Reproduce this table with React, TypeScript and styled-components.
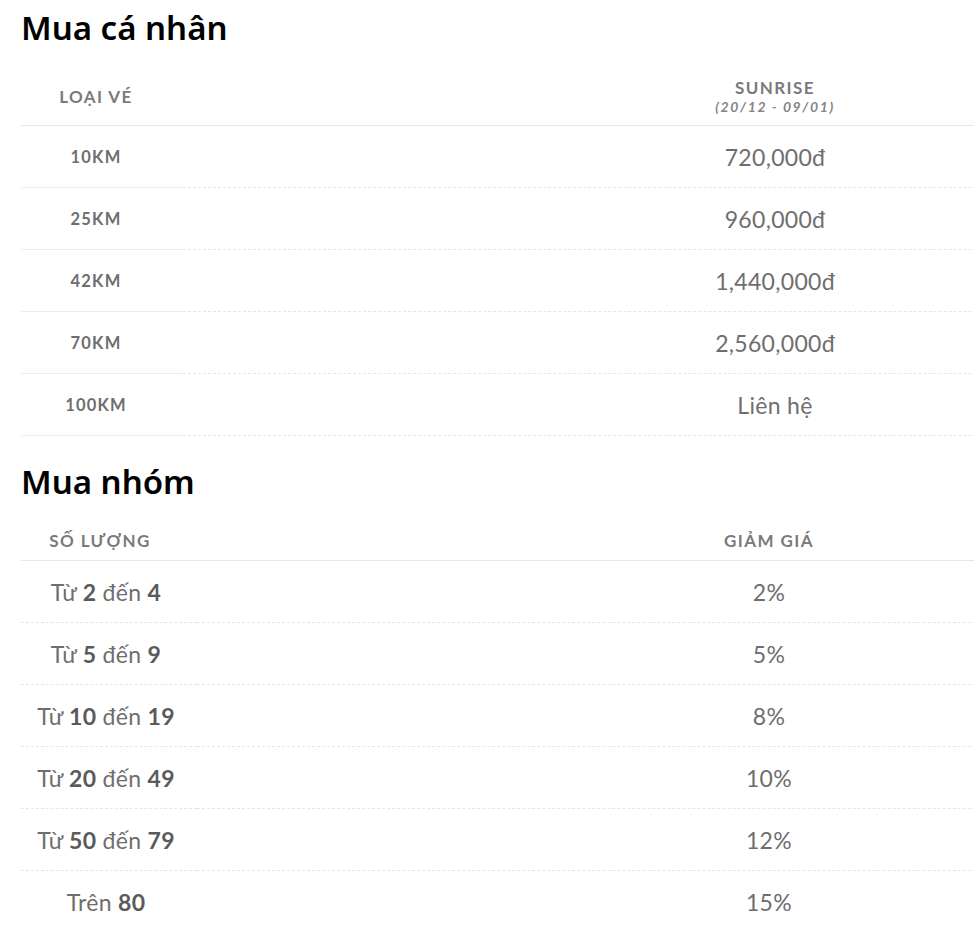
import React from "react";
import styled, { createGlobalStyle } from "styled-components";

const GlobalStyle = createGlobalStyle`
  html, body {
    margin: 0;
    padding: 0;
    background: #ffffff;
    overflow: hidden;
  }
  body {
    font-family: "Lato", "Open Sans", sans-serif;
  }
`;

const Page = styled.main`
  padding: 9px 0 0 21px;
  overflow: hidden;
`;

const Title = styled.h2<{ $top?: number }>`
  margin: ${(p) => p.$top ?? 0}px 0 20px 0;
  font-family: "Noto Sans", sans-serif;
  font-weight: 600;
  font-size: 33px;
  line-height: 38px;
  color: #000;
`;

const Table = styled.div<{ $cols: string }>`
  display: grid;
  grid-template-columns: ${(p) => p.$cols};
  width: max-content;
`;

const HeadCell = styled.div<{ $height: number; $shift?: number }>`
  height: ${(p) => p.$height}px;
  box-sizing: border-box;
  display: flex;
  flex-direction: column;
  align-items: center;
  justify-content: center;
  padding-right: ${(p) => p.$shift ?? 0}px;
  border-bottom: 1px solid #e6e6e6;
  font-family: "Lato", sans-serif;
  font-weight: 700;
  font-size: 17px;
  letter-spacing: 1.4px;
  color: #7a7a7a;
  text-transform: uppercase;
`;

const HeadMain = styled.span`
  line-height: 21px;
`;

const HeadSub = styled.span`
  font-size: 14px;
  font-style: italic;
  letter-spacing: 1.6px;
  line-height: 18px;
  color: #858585;
`;

const Cell = styled.div<{ $solid?: boolean; $shift?: number; $label?: boolean }>`
  height: 62px;
  box-sizing: border-box;
  display: flex;
  align-items: center;
  justify-content: center;
  padding-right: ${(p) => p.$shift ?? 0}px;
  border-bottom: 1px ${(p) => (p.$solid ? "solid #ececec" : "dashed #e6e6e6")};
  font-family: "Lato", sans-serif;
  color: #6e6e6e;
  font-size: ${(p) => (p.$label ? 16.5 : 23)}px;
  font-weight: ${(p) => (p.$label ? 700 : 400)};
  letter-spacing: ${(p) => (p.$label ? "1.2px" : "0.3px")};
  white-space: pre;
`;

const Num = styled.b`
  font-weight: 700;
  color: #5a5a5a;
`;

const individual = [
  ["10KM", "720,000đ"],
  ["25KM", "960,000đ"],
  ["42KM", "1,440,000đ"],
  ["70KM", "2,560,000đ"],
  ["100KM", "Liên hệ"],
];

const group: Array<[React.ReactNode, string]> = [
  [<>Từ <Num>2</Num> đến <Num>4</Num></>, "2%"],
  [<>Từ <Num>5</Num> đến <Num>9</Num></>, "5%"],
  [<>Từ <Num>10</Num> đến <Num>19</Num></>, "8%"],
  [<>Từ <Num>20</Num> đến <Num>49</Num></>, "10%"],
  [<>Từ <Num>50</Num> đến <Num>79</Num></>, "12%"],
  [<>Trên <Num>80</Num></>, "15%"],
];

export default function App() {
  return (
    <>
      <GlobalStyle />
      <Page>
        <Title>Mua cá nhân</Title>
        <Table $cols="162px 1184px">
          <HeadCell $height={59} $shift={12}>
            <HeadMain>Loại vé</HeadMain>
          </HeadCell>
          <HeadCell $height={59}>
            <HeadMain>Sunrise</HeadMain>
            <HeadSub>(20/12 - 09/01)</HeadSub>
          </HeadCell>
          {individual.map(([k, v]) => (
            <React.Fragment key={k}>
              <Cell $solid $label $shift={12}>{k}</Cell>
              <Cell>{v}</Cell>
            </React.Fragment>
          ))}
        </Table>

        <Title $top={27}>Mua nhóm</Title>
        <Table $cols="176px 1144px">
          <HeadCell $height={40} $shift={18}>
            <HeadMain>Số lượng</HeadMain>
          </HeadCell>
          <HeadCell $height={40}>
            <HeadMain>Giảm giá</HeadMain>
          </HeadCell>
          {group.map(([k, v]) => (
            <React.Fragment key={v}>
              <Cell $shift={6}>{k}</Cell>
              <Cell>{v}</Cell>
            </React.Fragment>
          ))}
        </Table>
      </Page>
    </>
  );
}
